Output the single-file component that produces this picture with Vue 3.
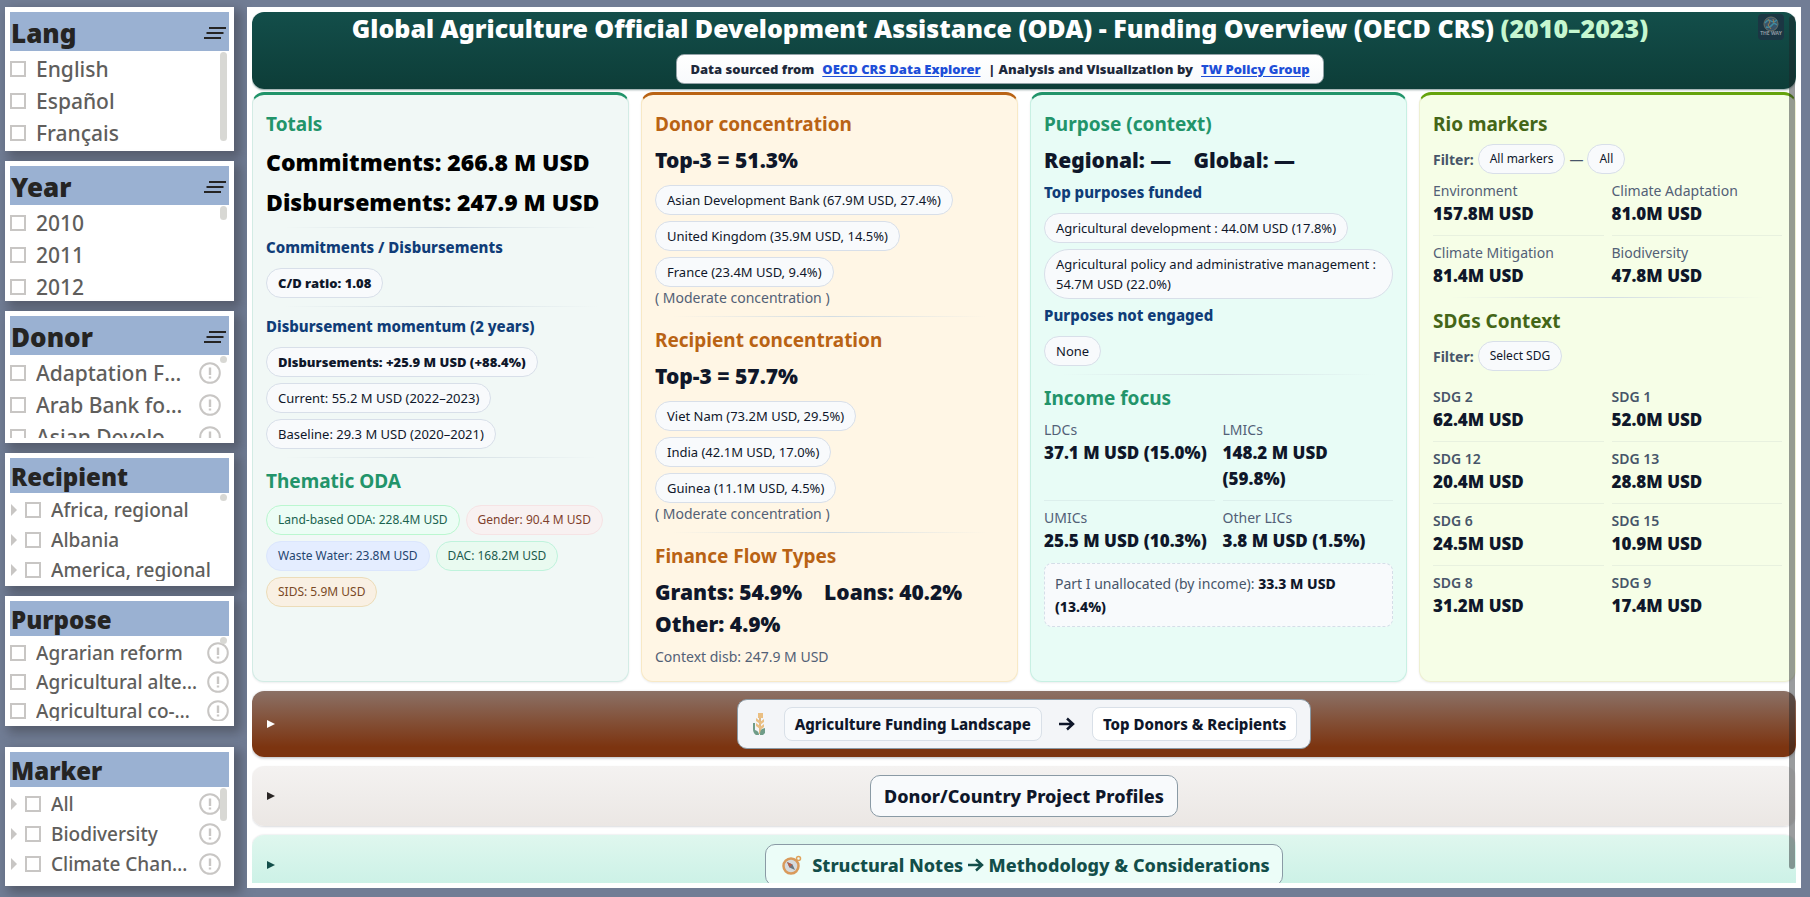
<script setup>
import { ref } from "vue";

const slicers = ref([
  { id: "lang", title: "Lang", menu: true, items: ["English", "Español", "Français"] },
  { id: "year", title: "Year", menu: true, items: ["2010", "2011", "2012"] },
  {
    id: "donor",
    title: "Donor",
    menu: true,
    info: true,
    items: ["Adaptation Fund", "Arab Bank for Economic Development", "Asian Development Bank"],
  },
  {
    id: "recipient",
    title: "Recipient",
    tree: true,
    items: ["Africa, regional", "Albania", "America, regional"],
  },
  {
    id: "purpose",
    title: "Purpose",
    info: true,
    items: ["Agrarian reform", "Agricultural alternative development", "Agricultural co-operatives"],
  },
  {
    id: "marker",
    title: "Marker",
    tree: true,
    info: true,
    items: ["All", "Biodiversity", "Climate Change Adaptation"],
  },
]);

const donors = [
  "Asian Development Bank (67.9M USD, 27.4%)",
  "United Kingdom (35.9M USD, 14.5%)",
  "France (23.4M USD, 9.4%)",
];

const recipients = [
  "Viet Nam (73.2M USD, 29.5%)",
  "India (42.1M USD, 17.0%)",
  "Guinea (11.1M USD, 4.5%)",
];

const themes = [
  { text: "Land-based ODA: 228.4M USD", tone: "land" },
  { text: "Gender: 90.4 M USD", tone: "gender" },
  { text: "Waste Water: 23.8M USD", tone: "water" },
  { text: "DAC: 168.2M USD", tone: "dac" },
  { text: "SIDS: 5.9M USD", tone: "sids" },
];

const income = [
  { label: "LDCs", value: "37.1 M USD (15.0%)" },
  { label: "LMICs", value: "148.2 M USD (59.8%)" },
  { label: "UMICs", value: "25.5 M USD (10.3%)" },
  { label: "Other LICs", value: "3.8 M USD (1.5%)" },
];

const markers = [
  { label: "Environment", value: "157.8M USD" },
  { label: "Climate Adaptation", value: "81.0M USD" },
  { label: "Climate Mitigation", value: "81.4M USD" },
  { label: "Biodiversity", value: "47.8M USD" },
];

const sdgs = [
  { label: "SDG 2", value: "62.4M USD" },
  { label: "SDG 1", value: "52.0M USD" },
  { label: "SDG 12", value: "20.4M USD" },
  { label: "SDG 13", value: "28.8M USD" },
  { label: "SDG 6", value: "24.5M USD" },
  { label: "SDG 15", value: "10.9M USD" },
  { label: "SDG 8", value: "31.2M USD" },
  { label: "SDG 9", value: "17.4M USD" },
];
</script>

<template>
  <div class="report">
    <aside class="sidebar">
      <section v-for="s in slicers" :key="s.id" class="slicer" :class="s.id">
        <header class="slicer-head">
          <h2>{{ s.title }}</h2>
          <svg v-if="s.menu" class="menu-icon" viewBox="0 0 22 14">
            <path d="M5 2H22M2.500 7H19.500M0 12H17" stroke="#252423" stroke-width="2" />
          </svg>
        </header>
        <div class="slicer-list">
          <label v-for="item in s.items" :key="item" class="slicer-item">
            <span v-if="s.tree" class="caret"></span>
            <input type="checkbox" />
            <span class="slicer-text">{{ item }}</span>
            <svg v-if="s.info" class="info-icon" viewBox="0 0 22 22">
              <circle cx="11" cy="11" r="9.800" fill="none" stroke="#c8c6c4" stroke-width="2" />
              <path d="M11 5.500V13M11 14.500V16.500" stroke="#c8c6c4" stroke-width="2.400" />
            </svg>
          </label>
          <span class="thumb"></span>
        </div>
      </section>
    </aside>

    <main class="board">
      <div class="pane">
        <header class="banner">
          <div class="banner-text">
            <h1>
              Global Agriculture Official Development Assistance (ODA) - Funding Overview (OECD CRS)
              <span class="period">(2010–2023)</span>
            </h1>
            <p class="source">
              <span>Data sourced from</span>
              <a href="#">OECD CRS Data Explorer</a>
              <span>| Analysis and Visualization by</span>
              <a href="#">TW Policy Group</a>
            </p>
          </div>
          <svg class="logo" viewBox="0 0 26 26">
            <rect width="26" height="26" rx="4" fill="#1b3643" />
            <circle cx="13" cy="10" r="7" fill="#38546a" stroke="#6b6f62" />
            <path d="M7 9q3-4 6-2t6-1M8 13q4 1 6-2t5 0" fill="none" stroke="#3f8ba0" stroke-width="1.500" />
            <path d="M10 5l2 3-2 3 3 4M15 5l1 4" fill="none" stroke="#9a7b4c" />
            <text x="13" y="21" text-anchor="middle">THE WAY</text>
          </svg>
        </header>

        <div class="cards">
          <article class="card totals">
            <h3>Totals</h3>
            <div class="headline">
              <div>Commitments: 266.8 M USD</div>
              <div>Disbursements: 247.9 M USD</div>
            </div>
            <hr />
            <h4>Commitments / Disbursements</h4>
            <div class="chips"><span class="chip strong">C/D ratio: 1.08</span></div>
            <hr />
            <h4>Disbursement momentum (2 years)</h4>
            <div class="chips stacked">
              <span class="chip strong">Disbursements: +25.9 M USD (+88.4%)</span>
              <span class="chip">Current: 55.2 M USD (2022–2023)</span>
              <span class="chip">Baseline: 29.3 M USD (2020–2021)</span>
            </div>
            <hr />
            <h3>Thematic ODA</h3>
            <div class="chips themes">
              <span v-for="t in themes" :key="t.tone" class="chip" :class="t.tone">{{ t.text }}</span>
            </div>
          </article>

          <article class="card donors">
            <h3>Donor concentration</h3>
            <div class="figures"><span>Top-3 = 51.3%</span></div>
            <div class="chips stacked">
              <span v-for="d in donors" :key="d" class="chip">{{ d }}</span>
            </div>
            <p class="note">( Moderate concentration )</p>
            <hr />
            <h3>Recipient concentration</h3>
            <div class="figures"><span>Top-3 = 57.7%</span></div>
            <div class="chips stacked">
              <span v-for="r in recipients" :key="r" class="chip">{{ r }}</span>
            </div>
            <p class="note">( Moderate concentration )</p>
            <hr />
            <h3>Finance Flow Types</h3>
            <div class="figures">
              <span>Grants: 54.9%</span>
              <span>Loans: 40.2%</span>
              <span>Other: 4.9%</span>
            </div>
            <p class="note spaced">Context disb: 247.9 M USD</p>
          </article>

          <article class="card purpose-card">
            <h3>Purpose (context)</h3>
            <div class="figures"><span>Regional: —</span><span>Global: —</span></div>
            <h4>Top purposes funded</h4>
            <div class="chips stacked">
              <span class="chip">Agricultural development : 44.0M USD (17.8%)</span>
              <span class="chip">Agricultural policy and administrative management : 54.7M USD (22.0%)</span>
            </div>
            <h4>Purposes not engaged</h4>
            <div class="chips"><span class="chip">None</span></div>
            <hr />
            <h3>Income focus</h3>
            <dl class="grid">
              <div v-for="i in income" :key="i.label" class="cell">
                <dt>{{ i.label }}</dt>
                <dd>{{ i.value }}</dd>
              </div>
            </dl>
            <p class="unallocated">Part I unallocated (by income): <b>33.3 M USD (13.4%)</b></p>
          </article>

          <article class="card rio">
            <h3>Rio markers</h3>
            <div class="filter">
              <b>Filter:</b><span class="chip">All markers</span><span>—</span><span class="chip">All</span>
            </div>
            <dl class="grid">
              <div v-for="m in markers" :key="m.label" class="cell">
                <dt>{{ m.label }}</dt>
                <dd>{{ m.value }}</dd>
              </div>
            </dl>
            <hr />
            <h3>SDGs Context</h3>
            <div class="filter"><b>Filter:</b><span class="chip">Select SDG</span></div>
            <dl class="grid sdg">
              <div v-for="g in sdgs" :key="g.label" class="cell">
                <dt>{{ g.label }}</dt>
                <dd>{{ g.value }}</dd>
              </div>
            </dl>
          </article>
        </div>

        <button type="button" class="fold landscape">
          <span class="arrow"></span>
          <span class="fold-title">
            <svg class="wheat" viewBox="0 0 16 24">
              <path d="M9 22V6" stroke="#d9a45f" stroke-width="1.500" />
              <path
                d="M7 1h5v5H7zM5 6l4 3v3L5 9zM13 7l-4 3v3l4-3zM5 11l4 3v3l-4-3zM13 12l-4 3v3l4-3z"
                fill="#eabf83"
              />
              <path d="M2 11h2v7q4 1 4 5H5q-3-2-3-6zM14 16v5l-2 2H9q0-5 2-6z" fill="#6f9c88" />
            </svg>
            <span class="tag">Agriculture Funding Landscape</span>
            <svg class="right" viewBox="0 0 16 14">
              <path d="M0 7H14M8 1.500L14 7L8 12.500" fill="none" stroke="#0f172a" stroke-width="2.500" />
            </svg>
            <span class="tag white">Top Donors &amp; Recipients</span>
          </span>
        </button>

        <button type="button" class="fold profiles">
          <span class="arrow"></span>
          <span class="fold-title">Donor/Country Project Profiles</span>
        </button>

        <button type="button" class="fold notes">
          <span class="arrow"></span>
          <span class="fold-title">
            <svg class="compass" viewBox="0 0 20 20">
              <circle cx="16.500" cy="3.500" r="2" fill="none" stroke="#e0a35c" stroke-width="1.500" />
              <circle cx="9" cy="11" r="7.500" fill="#d5dadd" stroke="#d99a5b" stroke-width="2.500" />
              <path d="M5 7l5.500 2.500L13 15l-5.500-2.500z" fill="#6b7780" />
              <path d="M5 7l5.500 2.500L7.500 12.500z" fill="#b5604a" />
            </svg>
            <span class="notes-text">
              Structural Notes
              <svg class="right" viewBox="0 0 16 14">
                <path d="M0 7H14M8 1.500L14 7L8 12.500" fill="none" stroke="#134e4a" stroke-width="2.500" />
              </svg>
              Methodology &amp; Considerations
            </span>
          </span>
        </button>
      </div>
      <span class="scrollbar"></span>
    </main>
  </div>
</template>

<style>
body {
  margin: 0;
  background: #717d95;
}
</style>

<style scoped>
.report {
  display: flex;
  gap: 13px;
  box-sizing: border-box;
  height: 100vh;
  padding: 7px 9px 9px 5px;
  overflow: hidden;
  font-family: "Noto Sans", "Open Sans", sans-serif;
  color: #0f172a;
}
.report * {
  box-sizing: border-box;
}
h1,
h2,
h3,
h4,
p,
dl,
dd {
  margin: 0;
}

/* slicers */
.sidebar {
  display: flex;
  flex: none;
  flex-direction: column;
  gap: 10px;
  width: 229px;
}
.slicer {
  padding: 5px;
  background: #fff;
  box-shadow: 5px 5px 10px 2px rgba(60, 62, 70, 0.5);
}
.slicer-head {
  display: flex;
  align-items: center;
  justify-content: space-between;
  height: 39px;
  padding: 2px 3px 0 1px;
  background: #9ab1d2;
}
.slicer-head h2 {
  font-size: 26px;
  line-height: 32px;
  font-weight: 900;
  color: #252423;
}
.menu-icon {
  width: 22px;
  height: 14px;
}
.slicer-list {
  position: relative;
  height: 95px;
  padding-top: 2px;
  overflow: hidden;
}
.slicer-item {
  display: flex;
  align-items: center;
  height: 32px;
  padding-right: 8px;
  font-size: 21px;
  font-weight: 500;
  color: #605e5c;
}
.slicer-item input {
  flex: none;
  width: 16px;
  height: 16px;
  margin: 0 10px 0 0;
  border: 2px solid #c8c6c4;
  background: #fff;
  appearance: none;
}
.slicer-text {
  flex: 1;
  overflow: hidden;
  text-overflow: ellipsis;
  white-space: nowrap;
}
.caret {
  flex: none;
  margin: 0 8px 0 1px;
  border-top: 6px solid transparent;
  border-bottom: 6px solid transparent;
  border-left: 6px solid #c8c6c4;
}
.info-icon {
  flex: none;
  width: 22px;
  height: 22px;
  margin-left: 6px;
}
.thumb {
  position: absolute;
  top: 1px;
  right: 2px;
  width: 7px;
  height: 7px;
  border-radius: 4px;
  background: #d8d8d4;
}
.lang .thumb {
  height: 89px;
}
.year .slicer-list {
  height: 91px;
}
.year .thumb {
  height: 14px;
}
.donor .slicer-list {
  height: 83px;
}
.donor .info-icon {
  margin-left: 10px;
}
.recipient .slicer-head,
.purpose .slicer-head,
.marker .slicer-head {
  height: 35px;
}
.recipient h2,
.purpose h2,
.marker h2 {
  font-size: 24px;
}
.recipient .slicer-list {
  height: 88px;
}
.recipient .slicer-item,
.purpose .slicer-item,
.marker .slicer-item {
  height: 30px;
  font-size: 19px;
}
.purpose .slicer-list {
  height: 85px;
}
.purpose .slicer-item {
  height: 29px;
  padding-right: 0;
}
.marker {
  margin-top: 11px;
}
.marker .slicer-list {
  height: 94px;
}
.marker .thumb {
  height: 33px;
}

/* main board */
.board {
  position: relative;
  flex: 1;
  min-width: 0;
  padding: 5px;
  background: #fff;
}
.pane {
  height: 100%;
  overflow: hidden;
}
.banner {
  display: flex;
  align-items: flex-start;
  padding: 0 12px 5px 0;
  border-radius: 12px;
  background: linear-gradient(#134e4a, #0d3d38);
  box-shadow: 0 1px 2px rgba(15, 60, 60, 0.5);
}
.banner-text {
  display: flex;
  flex: 1;
  flex-direction: column;
  align-items: center;
  gap: 10px;
  padding-right: 10px;
}
h1 {
  font-size: 25px;
  line-height: 32px;
  font-weight: 900;
  color: #fff;
}
.period {
  color: #c6f7d0;
}
.source {
  display: flex;
  gap: 8px;
  padding: 3px 13px;
  border: 1px solid #94a3a8;
  border-radius: 8px;
  background: linear-gradient(#fff, #f8fafc);
  font-size: 13px;
  line-height: 22px;
  font-weight: 900;
  color: #1e293b;
}
.source a {
  color: #1d4ed8;
  text-underline-offset: 2px;
}
.logo {
  width: 26px;
  height: 26px;
  margin-top: 2px;
}
.logo text {
  font-size: 5px;
  font-weight: 700;
  fill: #8b98a0;
}
.cards {
  display: grid;
  grid-template-columns: repeat(4, minmax(0, 1fr));
  gap: 12px;
  margin-top: 3px;
}
.card {
  padding: 14px 13px;
  border: 1px solid #d3ece5;
  border-top: 3px solid #22946a;
  border-radius: 12px;
  background: #f1f8f6;
  box-shadow: 0 1px 2px rgba(15, 23, 42, 0.08);
}
.donors {
  border-color: #b96314 #f8e9c6 #f8e9c6;
  background: #fff6e5;
}
.purpose-card {
  border-color: #22946a #c8f0e3 #c8f0e3;
  background: #e8fcf6;
}
.rio {
  border-color: #65a30d #eef0d2 #eef0d2;
  background: #f6fee7;
}
h3 {
  font-size: 19px;
  line-height: 30px;
  font-weight: 700;
  color: #22946a;
}
.donors h3 {
  color: #b96314;
}
.rio h3 {
  color: #446617;
}
h4 {
  margin-top: 5px;
  font-size: 15px;
  line-height: 22px;
  font-weight: 800;
  color: #103d78;
}
hr {
  height: 1px;
  margin: 8px 0;
  border: 0;
  background: linear-gradient(90deg, transparent 5%, #d3dde3 50%, transparent 95%);
}
hr + h4 {
  margin-top: 0;
}
.headline {
  display: grid;
  gap: 6px;
  margin-top: 6px;
  font-size: 23px;
  line-height: 34px;
  font-weight: 900;
  color: #000;
}
.figures {
  display: flex;
  flex-wrap: wrap;
  column-gap: 22px;
  margin-top: 5px;
  font-size: 21px;
  line-height: 32px;
  font-weight: 900;
}
.chips {
  display: flex;
  flex-wrap: wrap;
  gap: 6px;
  margin-top: 9px;
}
h4 + .chips {
  margin-top: 10px;
}
.stacked {
  flex-direction: column;
  align-items: flex-start;
}
.chip {
  padding: 4px 11px;
  border: 1px solid #d8dfe9;
  border-radius: 25px;
  background: #f8fafc;
  font-size: 13px;
  line-height: 20px;
}
.strong {
  font-weight: 900;
}
.themes .chip,
.filter .chip {
  font-size: 12px;
}
.land {
  border-color: #bbf7d0;
  background: #ecfdf5;
  color: #1b6350;
}
.gender {
  border-color: #f6e3e4;
  background: #f8f1f1;
  color: #7f3f2c;
}
.water {
  border-color: #dbe6fd;
  background: #e4edff;
  color: #25456f;
}
.dac {
  border-color: #bff3dc;
  background: #e9faf0;
  color: #1d5b4d;
}
.sids {
  border-color: #ecdcb8;
  background: #f9f0e3;
  color: #7a4a26;
}
.note {
  font-size: 14px;
  line-height: 21px;
  color: #526076;
}
.spaced {
  margin-top: 6px;
}
.grid {
  display: grid;
  grid-template-columns: repeat(2, minmax(0, 1fr));
  column-gap: 8px;
}
.cell {
  padding: 6px 0 8px;
  border-bottom: 1px solid rgba(100, 116, 139, 0.09);
}
.cell:nth-last-child(-n + 2) {
  padding-bottom: 0;
  border-bottom: 0;
}
.cell dt {
  font-size: 14px;
  line-height: 21px;
  color: #526076;
}
.cell dd {
  font-size: 17px;
  line-height: 26px;
  font-weight: 900;
}
.sdg {
  margin-top: 9px;
}
.sdg dt {
  font-weight: 600;
  color: #475569;
}
.unallocated {
  margin-top: 9px;
  padding: 8px 10px;
  border: 1px dashed #d5dee8;
  border-radius: 8px;
  background: #f8fafc;
  font-size: 14px;
  line-height: 23px;
  color: #475569;
}
.unallocated b {
  font-weight: 800;
  color: #0f172a;
}
.filter {
  display: flex;
  align-items: center;
  gap: 4px;
  margin-top: 5px;
  font-size: 14px;
  color: #475569;
}
.filter .chip {
  color: #0f172a;
}

/* collapsed sections */
.fold {
  display: grid;
  grid-template-columns: 20px 1fr 20px;
  align-items: center;
  justify-items: center;
  width: 100%;
  margin-top: 9px;
  padding: 8px 15px;
  border: 0;
  border-radius: 12px;
  box-shadow: 0 1px 3px rgba(15, 23, 42, 0.3);
  font-family: inherit;
  text-align: left;
}
.landscape {
  background: linear-gradient(#8b7166, #7c3410 85%);
  color: #fff;
}
.profiles {
  padding: 9px 15px;
  background: linear-gradient(#f4f2f1, #ebe7e4);
  box-shadow: 0 1px 2px rgba(15, 23, 42, 0.15);
  color: #292524;
}
.notes {
  padding: 9px 15px;
  background: linear-gradient(#dff7ee, #c8f0e5);
  box-shadow: 0 0 2px rgba(15, 23, 42, 0.2);
  color: #134e4a;
}
.arrow {
  justify-self: start;
  border-top: 4px solid transparent;
  border-bottom: 4px solid transparent;
  border-left: 8px solid currentColor;
}
.fold-title {
  display: flex;
  align-items: center;
  gap: 10px;
  padding: 7px 13px;
  border: 1px solid #8a9aa5;
  border-radius: 10px;
  background: #f8fafc;
  font-size: 18px;
  line-height: 26px;
  font-weight: 800;
  color: #0f172a;
}
.landscape .fold-title {
  gap: 17px;
  background: #f3f5f8;
  font-size: 15px;
}
.notes .fold-title {
  padding: 7px 12px 7px 16px;
  background: #ecfdf8;
  color: #134e4a;
}
.tag {
  padding: 3px 10px;
  border: 1px solid #d9e0e8;
  border-radius: 8px;
  background: #f8fafc;
}
.white {
  background: #fff;
}
.wheat {
  width: 16px;
  height: 24px;
}
.right {
  width: 16px;
  height: 14px;
}
.compass {
  width: 20px;
  height: 20px;
}
.scrollbar {
  position: absolute;
  top: 9px;
  right: 6px;
  bottom: 19px;
  width: 6px;
  border-radius: 3px;
  background: rgba(30, 35, 40, 0.45);
}
</style>
